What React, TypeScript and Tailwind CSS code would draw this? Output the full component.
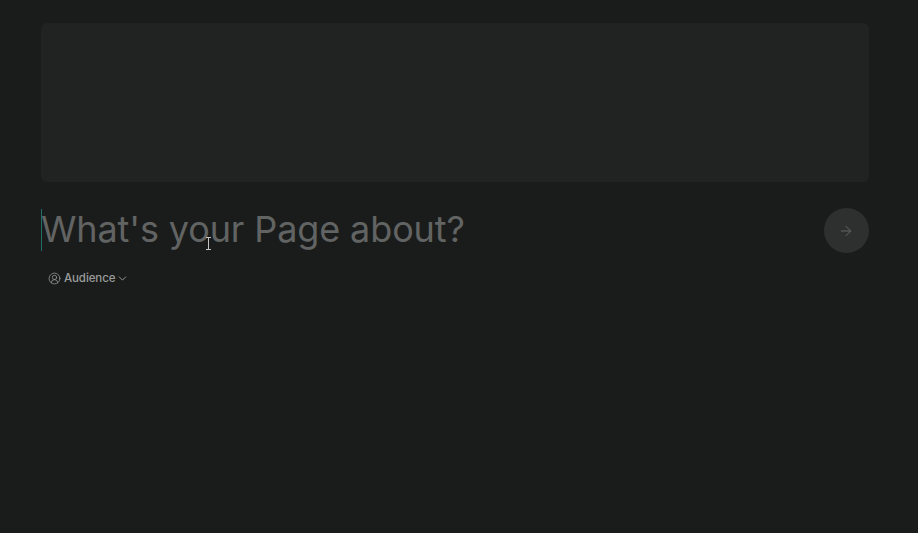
import { ArrowRight, ChevronDown, CircleUserRound } from "lucide-react";

export default function App() {
  return (
    <div className="relative h-[533px] w-[918px] overflow-hidden bg-[#1a1c1b] font-['Inter',sans-serif]">
      <div className="flex flex-col px-[41px] pt-[23px] pr-[49px]">
        <div className="h-[159px] rounded-[6px] bg-[#212322]" />
        <div className="mt-[26px] flex items-center justify-between">
          <div className="relative flex h-[45px] items-center">
            <span className="-mt-[3px] text-[36px] font-normal leading-[45px] tracking-[-0.12px] text-[#626463]">What's your Page about?</span>
            <span className="absolute left-0 top-[1px] h-[42px] w-px bg-[#1f6f66]" />
          </div>
          <button className="flex h-[45px] w-[45px] items-center justify-center rounded-full bg-[#2e302f]">
            <ArrowRight size={16} strokeWidth={1.5} className="-ml-px text-[#636564]" />
          </button>
        </div>
        <div className="mt-[18px] flex items-center pl-[7px] text-[11.5px] font-medium leading-[14px] tracking-[-0.1px] text-[#9a9c9b]">
          <CircleUserRound size={13} strokeWidth={1.4} />
          <span className="ml-[3px]">Audience</span>
          <ChevronDown size={13} strokeWidth={1.75} className="ml-px" />
        </div>
      </div>
      <svg className="absolute left-[205px] top-[237px]" width="7" height="13" viewBox="0 0 7 13" fill="none" stroke="#c4c6c5" strokeWidth="1">
        <path d="M1 .5h5M3.5.5v12M1 12.5h5" />
      </svg>
    </div>
  );
}
